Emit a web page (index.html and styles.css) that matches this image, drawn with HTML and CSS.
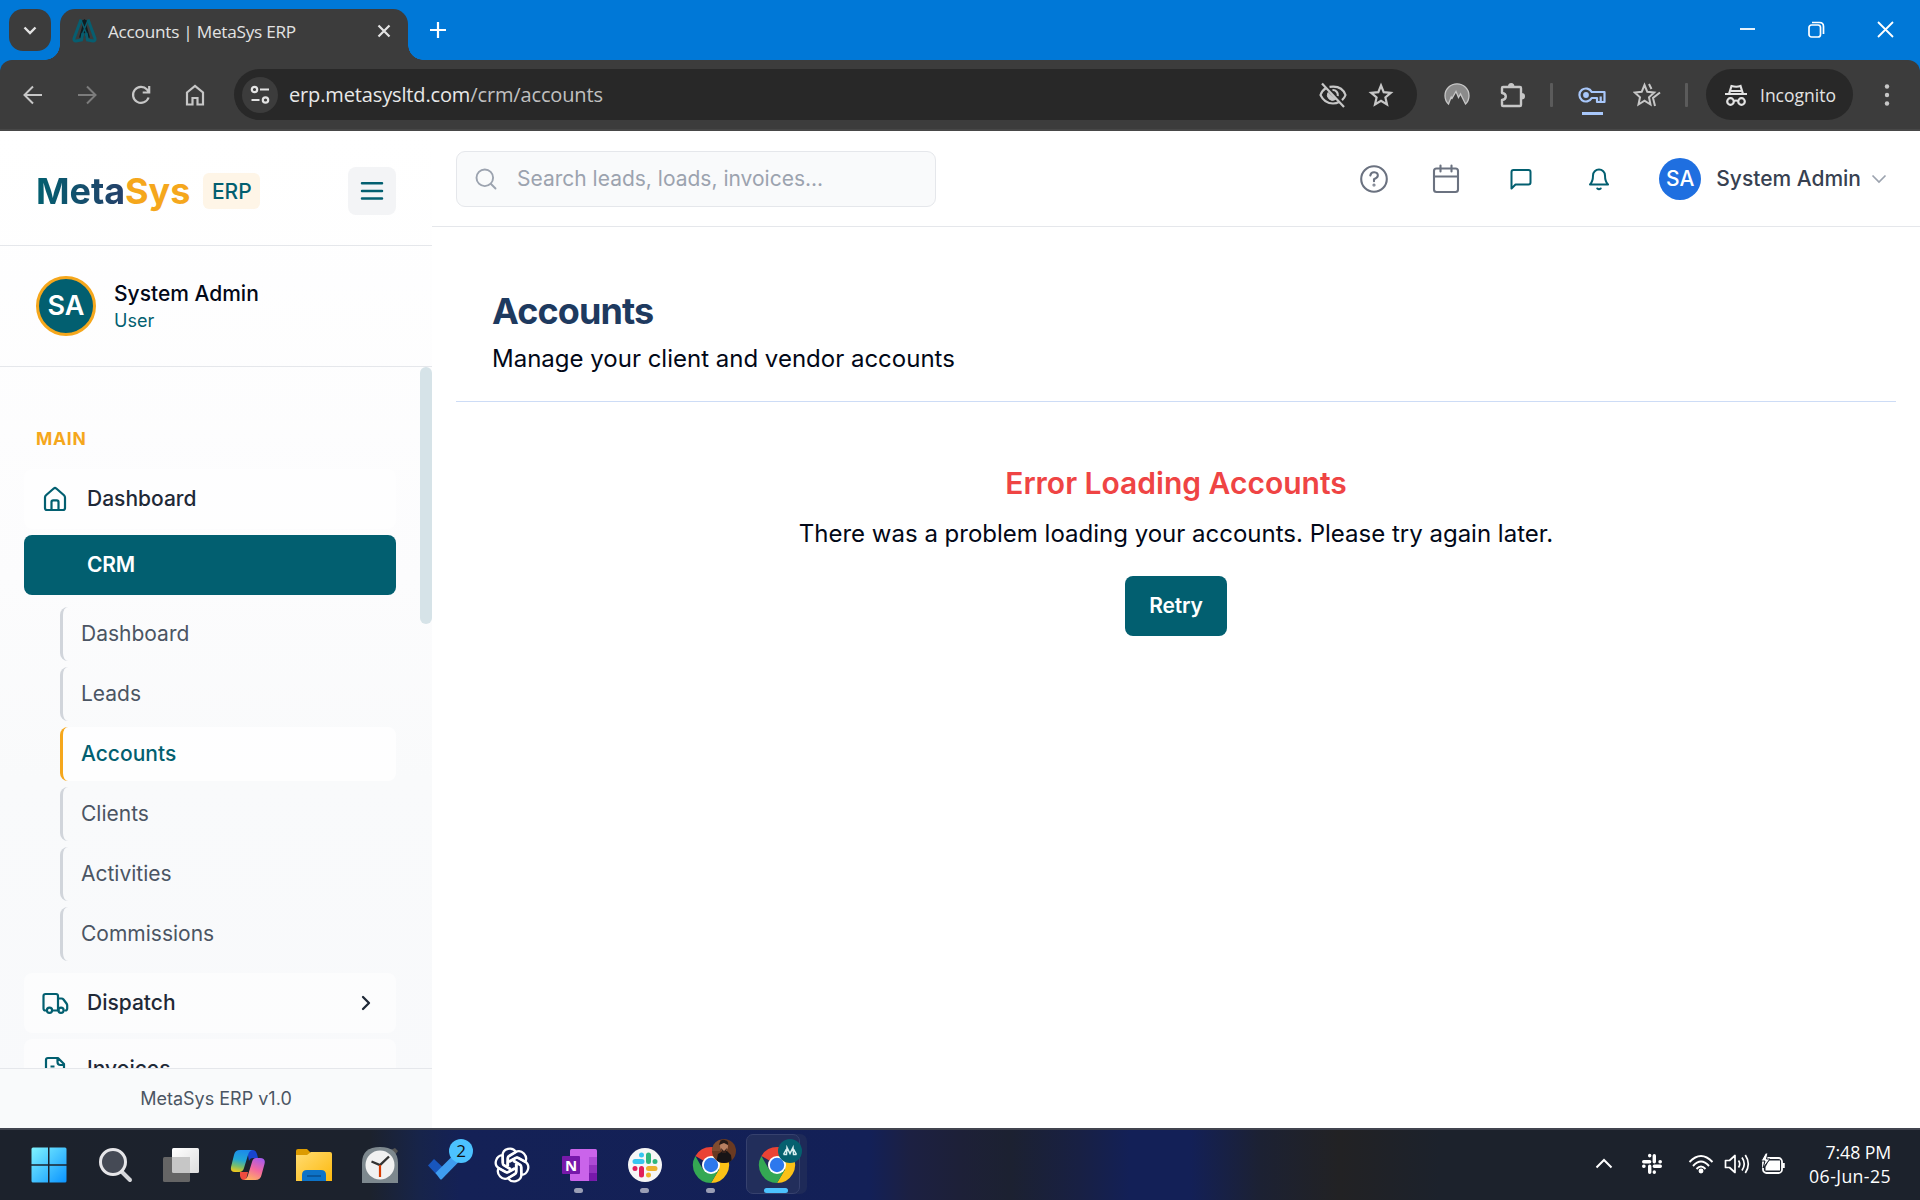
FILE: index.html
```html
<!DOCTYPE html>
<html lang="en">
<head>
<meta charset="utf-8">
<title>Accounts | MetaSys ERP</title>
<link rel="stylesheet" href="styles.css">
</head>
<body>
<div class="screen">
  <header class="tabstrip">
    <div class="tab-search"><svg width="42" height="42" viewBox="0 0 42 42" fill="none" stroke="#e3e3e3" stroke-width="2.4"><path d="M15.500 18.500l5.500 5.500 5.500-5.500"/></svg></div>
    <div class="tab">
      <svg class="favicon" width="25" height="25" viewBox="0 0 25 25" fill="none"><path d="M11 2L16 20M14 2L9 20" stroke="#111c20" stroke-width="4"/><path d="M9 1.500L2 20.500Q1.500 23 4 23L9.500 22L11 15M16 1.500L23 20.500Q23.500 23 21 23L15.500 22L14 15" stroke="#075e70" stroke-width="3"/><path d="M9 2l6 15M16 2l-6 15" stroke="#075e70" stroke-width="1.500"/></svg>
      <span class="tab-title">Accounts | MetaSys ERP</span>
      <svg class="tab-close" width="14" height="14" viewBox="0 0 14 14" stroke="#e3e3e3" stroke-width="2.200"><path d="M1.500 1.500l11 11M12.500 1.500l-11 11"/></svg>
    </div>
    <svg class="new-tab" width="18" height="18" viewBox="0 0 18 18" stroke="#fff" stroke-width="2.200"><path d="M9 1v16M1 9h16"/></svg>
    <div class="window-controls">
      <svg width="17" height="17" viewBox="0 0 17 17" stroke="#fff" stroke-width="1.800"><path d="M1 8h15"/></svg>
      <svg width="17" height="17" viewBox="0 0 17 17" fill="none" stroke="#fff" stroke-width="1.700"><rect x="1" y="4" width="11.500" height="12" rx="2.500"/><path d="M4 1.500h7.500q4 0 4 4V13"/></svg>
      <svg width="17" height="17" viewBox="0 0 17 17" stroke="#fff" stroke-width="1.800"><path d="M1 1l15 15M16 1L1 16"/></svg>
    </div>
  </header>

  <nav class="toolbar">
    <div class="nav-buttons">
      <svg width="20" height="20" viewBox="0 0 20 20" fill="none" stroke="#c7c7c7" stroke-width="2"><path d="M19 10H2M10 1.500L1.500 10l8.500 8.500"/></svg>
      <svg width="20" height="20" viewBox="0 0 20 20" fill="none" stroke="#7c7c7c" stroke-width="2"><path d="M1 10h17M10 1.500l8.500 8.500-8.500 8.500"/></svg>
      <svg width="20" height="20" viewBox="0 0 20 20" fill="none" stroke="#c7c7c7" stroke-width="2.200"><path d="M17.600 12.500A8 8 0 1 1 16 4.500L18 7M18.200 1v6.500h-6.500"/></svg>
      <svg width="20" height="22" viewBox="0 0 20 22" fill="none" stroke="#c7c7c7" stroke-width="2.200"><path d="M2 8.500L10 2l8 6.500V20.500h-5.500V14h-5v6.500H2z"/></svg>
    </div>
    <div class="omnibox">
      <div class="site-info"><svg width="20" height="20" viewBox="0 0 20 20" fill="none" stroke="#e3e3e3" stroke-width="2.200"><circle cx="4.500" cy="4.500" r="2.700"/><path d="M10 4.500h9M1.500 15h8"/><circle cx="15.500" cy="15" r="2.700"/></svg></div>
      <span class="url">erp.metasysltd.com<span class="path">/crm/accounts</span></span>
      <svg class="eye" width="30" height="28" viewBox="0 0 30 28" fill="none" stroke="#c7c7c7" stroke-width="2.200"><path d="M8 7Q4 9.500 2.500 14Q6.500 22.500 15 22.500Q18.500 22.500 21 21M11.500 5.900Q24 4 27.500 14Q26.500 17 24 19.200"/><path d="M10 11.500a5.300 5.300 0 0 0 7.500 7z" fill="#c7c7c7" stroke-width="1"/><path d="M14.500 9a5 5 0 0 1 5.300 6"/><path d="M4 2.500L26 26"/></svg>
      <svg class="star" width="26" height="26" viewBox="0 0 26 26" fill="none" stroke="#c7c7c7" stroke-width="2.200"><path d="M13 3.500l2.700 6.700 7.100.600-5.400 4.700 1.600 7-6-3.700-6 3.700 1.600-7-5.400-4.700 7.100-.600z"/></svg>
    </div>
    <svg class="ext-mountain" width="26" height="26" viewBox="0 0 26 26"><path d="M4.500 22A12 11.800 0 1 1 21.500 22L16.500 12l-2 3.500-2.500-6-4 7-.800-1.500z" fill="#8b8b8b" stroke="#c7c7c7" stroke-width="1.300"/></svg>
    <svg class="ext-puzzle" width="28" height="28" viewBox="0 0 28 28" fill="none" stroke="#c7c7c7" stroke-width="2.400" stroke-linejoin="round"><path d="M5 6h17q1 0 1 1v17q0 1-1 1H5q-1 0-1-1v-5q3.800-.500 3.800-3.500T4 12V7q0-1 1-1z"/><path d="M10 5.500q0-3.500 3.200-3.500t3.200 3.500zM23.500 12q3.500 0 3.500 3.200t-3.500 3.200z" fill="#c7c7c7" stroke="none"/></svg>
    <i class="divider"></i>
    <div class="key"><svg width="28" height="18" viewBox="0 0 28 18" fill="none" stroke="#a8c7fa" stroke-width="2.200" stroke-linejoin="round"><path d="M13.700 6a6.500 6.500 0 1 0 0 6H19v4h7.500V6zM22.700 15.500v-5"/><circle cx="8" cy="9" r="2.900" fill="#a8c7fa" stroke="none"/></svg></div>
    <svg class="star-media" width="28" height="26" viewBox="0 0 28 26" fill="none" stroke="#c7c7c7" stroke-width="2"><path d="M11.500 3l2.800 6.800 6.900.700-5.200 4.800 1.500 7.200-6-3.800-6 3.800L7 15.300l-5.200-4.800 6.900-.700zM16 2l2.500 5M27 10.500l-7 5.500 2 8"/></svg>
    <i class="divider second"></i>
    <div class="incognito"><svg width="24" height="24" viewBox="0 0 24 24" fill="none" stroke="#e3e3e3" stroke-width="2.200"><path d="M1 11h22M5 11l2.500-8q5 1.500 9 0L19 11"/><circle cx="6.500" cy="18.500" r="3.300"/><circle cx="17.500" cy="18.500" r="3.300"/><path d="M10 18q2-1 4 0M7 8h10"/></svg><span>Incognito</span></div>
    <svg class="menu-dots" width="6" height="24" viewBox="0 0 6 24" fill="#c7c7c7"><circle cx="3" cy="3.500" r="2.200"/><circle cx="3" cy="12" r="2.200"/><circle cx="3" cy="20.500" r="2.200"/></svg>
  </nav>

  <div class="app">
    <aside class="sidebar">
      <div class="brand">
        <span class="logo"><span class="logo-meta">Meta</span><span class="logo-sys">Sys</span></span>
        <span class="badge">ERP</span>
        <button class="burger"><svg width="24" height="20" viewBox="0 0 24 20" stroke="#025f70" stroke-width="2.500" stroke-linecap="round"><path d="M2 2.200h20M2 10h20M2 17.500h20"/></svg></button>
      </div>
      <div class="user">
        <div class="avatar">SA</div>
        <div class="user-text"><div class="user-name">System Admin</div><div class="user-role">User</div></div>
      </div>
      <div class="menu">
        <h2 class="section">MAIN</h2>
        <a class="item"><svg width="28" height="28" viewBox="0 0 28 28" fill="none" stroke="#025f70" stroke-width="2.200" stroke-linejoin="round"><path d="M4 12.500q0-1.300 1-2.200l7.700-6.800q1.300-1 2.600 0l7.700 6.800q1 1 1 2.200V23q0 2-2 2H6q-2 0-2-2z"/><path d="M10.500 25v-8q0-1.700 1.700-1.700h3.600q1.700 0 1.700 1.700v8"/></svg><span>Dashboard</span></a>
        <a class="item current"><span>CRM</span></a>
        <div class="submenu">
          <a>Dashboard</a><a>Leads</a><a class="selected">Accounts</a><a>Clients</a><a>Activities</a><a>Commissions</a>
        </div>
        <a class="item"><svg width="28" height="28" viewBox="0 0 28 28" fill="none" stroke="#025f70" stroke-width="2.200" stroke-linejoin="round" stroke-linecap="round"><path d="M5.500 21.500H4.500Q2.500 21.500 2.500 19.500V7Q2.500 5 4.500 5H15q2 0 2 2v14.500h-6M17 9.500h3.500q1.200 0 2 1l3 4q.700 1 .700 2V19.500q0 2-2 2M17 21.500h.500"/><circle cx="8.500" cy="21.300" r="2.600"/><circle cx="20" cy="21.300" r="2.600"/></svg><span>Dispatch</span><svg class="chev" width="12" height="18" viewBox="0 0 12 18" fill="none" stroke="#1f2937" stroke-width="2.300" stroke-linecap="round" stroke-linejoin="round"><path d="M3 3l6 6-6 6"/></svg></a>
        <a class="item"><svg width="28" height="28" viewBox="0 0 28 28" fill="none" stroke="#025f70" stroke-width="2.200" stroke-linejoin="round"><path d="M17 3H7Q5 3 5 5v18q0 2 2 2h14q2 0 2-2V9zM16.500 3v4q0 3 3 3H23M9.500 11.500h4M9.500 16h9"/></svg><span>Invoices</span></a>
      </div>
      <footer class="version">MetaSys ERP v1.0</footer>
      <i class="scroll-thumb"></i>
    </aside>

    <main class="main">
      <div class="topbar">
        <div class="search"><svg width="22" height="22" viewBox="0 0 22 22" fill="none" stroke="#9ca3af" stroke-width="1.900" stroke-linecap="round"><circle cx="9.800" cy="9.800" r="8.300"/><path d="M16 16l4.500 4.500"/></svg><span>Search leads, loads, invoices...</span></div>
        <div class="actions">
          <svg width="30" height="30" viewBox="0 0 30 30" fill="none" stroke="#6b7280" stroke-width="2.100" stroke-linecap="round"><circle cx="15" cy="15" r="12.800"/><path d="M11.300 11.500q.700-3.500 4-3.300 3.800.300 3.500 3.600-.300 1.900-3.800 3.500v2"/><circle cx="15" cy="21" r=".500"/></svg>
          <svg width="30" height="30" viewBox="0 0 30 30" fill="none" stroke="#6b7280" stroke-width="2.100" stroke-linecap="round"><rect x="3" y="4.500" width="24" height="23.500" rx="2.500"/><path d="M3 12.500h24M9.500 1.500v6M20.500 1.500v6"/></svg>
          <svg width="24" height="24" viewBox="0 0 24 24" fill="none" stroke="#025f70" stroke-width="2" stroke-linejoin="round"><path d="M2.500 21.500V5q0-2 2-2h15q2 0 2 2v10.500q0 2-2 2H6.500z"/></svg>
          <svg width="24" height="24" viewBox="0 0 24 24" fill="none" stroke="#025f70" stroke-width="2" stroke-linejoin="round" stroke-linecap="round"><path d="M3 17.500c2.500-2.500 3-5 3-9a6 6 0 0 1 12 0c0 4 .500 6.500 3 9zM10.300 21.500q1.700 1.500 3.400 0"/></svg>
          <div class="account"><div class="account-avatar">SA</div><span>System Admin</span><svg width="16" height="12" viewBox="0 0 16 12" fill="none" stroke="#9ca3af" stroke-width="1.700"><path d="M1.500 2.500L8 9l6.500-6.500"/></svg></div>
        </div>
      </div>
      <div class="page-head">
        <h1>Accounts</h1>
        <p>Manage your client and vendor accounts</p>
      </div>
      <section class="error">
        <h3>Error Loading Accounts</h3>
        <p>There was a problem loading your accounts. Please try again later.</p>
        <button class="retry">Retry</button>
      </section>
    </main>
  </div>

  <footer class="taskbar">
    <div class="task-icons">
      <div class="task"><svg width="36" height="36" viewBox="0 0 36 36"><defs><linearGradient id="win" x1="0" y1="0" x2="1" y2="1"><stop stop-color="#80f4ff"/><stop offset="1" stop-color="#0a94ff"/></linearGradient></defs><path fill="url(#win)" d="M2 .500h15v16.700H.500V2Q.500.500 2 .500zM18.500.500H34q1.500 0 1.500 1.500v15.200h-17zM.500 18.700H17v16.800H2q-1.500 0-1.500-1.500zM18.500 18.700h17V34q0 1.500-1.500 1.500H18.500z"/></svg></div>
      <div class="task"><svg width="36" height="36" viewBox="0 0 36 36"><path d="M25 25l8 8" stroke="#d5d6da" stroke-width="4" stroke-linecap="round"/><circle cx="16" cy="15" r="12.500" fill="#454a55" stroke="#e6e6e9" stroke-width="3"/></svg></div>
      <div class="task"><svg width="38" height="36" viewBox="0 0 38 36"><defs><linearGradient id="tv" x1="0" y1="0" x2="1" y2="1"><stop stop-color="#fff"/><stop offset="1" stop-color="#ddd"/></linearGradient></defs><rect x="10" y="1" width="27" height="25" rx="1.500" fill="url(#tv)"/><rect x="1" y="10" width="27" height="25" rx="1.500" fill="#656565"/><path d="M10 10h18v16H11.500q-1.500 0-1.500-1.500z" fill="#c6c6c6"/></svg></div>
      <div class="task"><svg width="36" height="34" viewBox="0 0 36 34"><defs><linearGradient id="cp1" x1=".5" y1="0" x2=".3" y2="1"><stop stop-color="#1c8bea"/><stop offset=".45" stop-color="#22a8d5"/><stop offset=".75" stop-color="#7cbe68"/><stop offset="1" stop-color="#f0c81c"/></linearGradient><linearGradient id="cp2" x1=".7" y1="0" x2=".3" y2="1"><stop stop-color="#a85bea"/><stop offset=".5" stop-color="#f368a0"/><stop offset="1" stop-color="#ffb062"/></linearGradient></defs><path d="M17 2h6q3 0 4 4l1 4h-5q-3 0-4 3z" fill="#1745cf"/><path d="M10 24h8l-2 8h-2q-3 0-4-4z" fill="#ee4c3f"/><path d="M10 2h12q-3 1-4 5l-4 13q-1 4-5 4H5q-5 0-4-5l3-12q1-5 6-5z" fill="url(#cp1)"/><path d="M26 10h4q6 0 4.500 6l-3 11q-1 5-6 5H14q3-1 4-5l4-13q1-4 4-4z" fill="url(#cp2)"/></svg></div>
      <div class="task"><svg width="38" height="36" viewBox="0 0 38 36"><defs><linearGradient id="fd" x1="0" y1="0" x2="1" y2="1"><stop stop-color="#ffdc72"/><stop offset="1" stop-color="#fdb90d"/></linearGradient></defs><path d="M1 4q0-2 2-2h9l4 4v5H1z" fill="#dc9b00"/><path d="M1 8h11l4-3h19q2 0 2 2v27H1z" fill="url(#fd)"/><path d="M7 34v-6q0-5 5-5h14q5 0 5 5v6z" fill="#0d73c8"/><path d="M12 29h14" stroke="#09579d" stroke-width="2"/></svg></div>
      <div class="task"><svg width="38" height="38" viewBox="0 0 38 38"><path d="M30 4l4-2 3 3-3 4z" fill="#555"/><path d="M1 37V17Q1 1 19 1t18 16v20z" fill="#7d888e"/><circle cx="19" cy="19" r="14.500" fill="#f1f1f1"/><path d="M10.500 15.500L19 19l9-8.500" fill="none" stroke="#333" stroke-width="2.400"/><path d="M19 19v12" stroke="#d83b01" stroke-width="2.200"/></svg></div>
      <div class="task todo"><svg width="38" height="38" viewBox="0 0 38 38"><path d="M1 19.500l6-6.500 9 8.500-6.500 7z" fill="#1856bd"/><path d="M8.500 27L29 6.500l6 6-20 20.500q-1 1-2 0z" fill="#3f9df0"/></svg><span class="count">2</span></div>
      <div class="task"><svg width="36" height="36" viewBox="-18 -18 36 36" fill="none" stroke="#fff" stroke-width="2.300" stroke-linejoin="round"><path id="petal" d="M-9.500 -9V-2.500Q-9.500 -.500 -8 .500L0 5.500M-9.500 -9C-9.500 -17 .500 -18.500 4 -13L-4 -8V1"/><use href="#petal" transform="rotate(60)"/><use href="#petal" transform="rotate(120)"/><use href="#petal" transform="rotate(180)"/><use href="#petal" transform="rotate(240)"/><use href="#petal" transform="rotate(300)"/></svg></div>
      <div class="task running onenote"><svg width="36" height="34" viewBox="0 0 36 34"><rect x="9" y="1" width="27" height="32" rx="1.500" fill="#ca64ea"/><path d="M28 9h8v8h-8z" fill="#ae4bd5"/><path d="M28 17h8v8h-8z" fill="#9332bf"/><path d="M28 25h8v6.500q0 1.500-1.500 1.500H28z" fill="#7719aa"/><rect x="1" y="8" width="18" height="18" rx="1" fill="#7719aa"/><text x="10" y="22.500" text-anchor="middle" class="one-n">N</text></svg></div>
      <div class="task running"><svg width="36" height="36" viewBox="0 0 36 36" fill="none" stroke-width="5" stroke-linecap="round"><circle cx="18" cy="18" r="17" fill="#f6f6f6"/><path d="M14.500 8v.100M8 14.500h7" stroke="#36c5f0"/><path d="M21.500 8v6.500M28 14.500v.100" stroke="#2eb67d"/><path d="M21.500 21.500H28M21.500 28v.100" stroke="#ecb22e"/><path d="M14.500 21.500V28M8 21.500v.100" stroke="#e01e5a"/></svg></div>
      <div class="task running"><svg class="chrome" width="38" height="38" viewBox="0 0 38 38"><g id="chromeLogo"><path d="M19 19L3.400 10A18 18 0 0 1 34.600 10z" fill="#ea4335"/><path d="M19 10h15.600A18 18 0 0 1 19 37l8-13.500z" fill="#fbc116"/><path d="M3.400 10A18 18 0 0 0 19 37l8-13.500-8-1-8 1z" fill="#34a853"/><circle cx="19" cy="19" r="9" fill="#fff"/><circle cx="19" cy="19" r="7.200" fill="#2d78ed"/></g></svg><svg class="profile" width="24" height="24" viewBox="0 0 24 24"><defs><clipPath id="round"><circle cx="12" cy="12" r="12"/></clipPath></defs><g clip-path="url(#round)"><path d="M0 0h24v24H0z" fill="#6a3a22"/><path d="M0 0h8v12H0z" fill="#804c30"/><path d="M4 24l2-9 5-3h4l4 4 1 8z" fill="#171416"/><ellipse cx="12" cy="7" rx="4" ry="6" fill="#b98061"/><path d="M7 6q1-6 6-5 4 1 3 5l-4-2z" fill="#251916"/><path d="M9 9l3 3 3-3-1 5h-4z" fill="#352019"/></g></svg></div>
      <div class="task running active"><svg class="chrome" width="38" height="38" viewBox="0 0 38 38"><use href="#chromeLogo"/></svg><svg class="profile" width="24" height="24" viewBox="0 0 24 24"><circle cx="12" cy="12" r="12" fill="#05606f"/><path d="M5.500 15.500h3L9 8.500l3 6 3-6 .500 7h3M9.300 8.500L5.500 15.500M14.700 8.500l3.800 7" fill="none" stroke="#d9eef0" stroke-width="1.500"/></svg></div>
    </div>
    <div class="tray">
      <svg width="18" height="12" viewBox="0 0 18 12" fill="none" stroke="#fff" stroke-width="2"><path d="M1.500 9.500L9 2l7.500 7.500"/></svg>
      <svg width="22" height="22" viewBox="0 0 22 22" fill="none" stroke="#fff" stroke-width="3.400" stroke-linecap="round"><path d="M8.700 2.500v.300M2.700 8.700h6M13.300 2.700v6M19.300 8.700h-.300M13.300 13.300h6M13.300 19.300v-.300M8.700 13.300v6M2.700 13.300h.300"/></svg>
      <svg width="26" height="20" viewBox="0 0 26 20" fill="none" stroke="#fff" stroke-width="1.900"><path d="M1.500 8Q13-4 24.500 8M5 12Q13 3 21 12M8.500 15q4.500-5 9 0"/><circle cx="13" cy="17" r="1.500" fill="#fff"/></svg>
      <svg width="26" height="22" viewBox="0 0 26 22" fill="none" stroke="#fff" stroke-width="1.700" stroke-linejoin="round"><path d="M1.500 7.500h4L11 2.500v17l-5.500-5h-4zM14.500 7.500q2.500 3.500 0 7M18 4.500q4.500 6.500 0 13M21.300 2q6 9 0 18"/></svg>
      <svg width="26" height="22" viewBox="0 0 26 22"><rect x="3" y="5" width="19" height="15" rx="3.500" fill="none" stroke="#fff" stroke-width="1.800"/><path d="M9 7.500h11v10H5.500V14z" fill="#fff"/><path d="M23.500 10v5" stroke="#fff" stroke-width="2.500"/><path d="M5.500 0L1 8h4l-2 7 7-9H6.500L8 0z" fill="#fff" stroke="#1c222d"/></svg>
      <div class="clock"><div>7:48 PM</div><div class="date">06-Jun-25</div></div>
    </div>
  </footer>
</div>
</body>
</html>
```
FILE: styles.css
```css
* { box-sizing: border-box; }
body { margin: 0; font-family: Inter, sans-serif; }
h1, h2, h3, p { margin: 0; }
button { border: 0; padding: 0; font-family: inherit; }
svg { display: block; flex: none; }
.screen { width: 1920px; height: 1200px; display: flex; flex-direction: column; overflow: hidden; background: #fff; }

/* Browser window */
.tabstrip { height: 60px; flex: none; display: flex; padding: 9px 26px 0 9px; background: #0078d7; font-family: "Open Sans", sans-serif; }
.tab-search { width: 42px; height: 42px; border-radius: 14px; background: #3c3c3c; }
.tab { position: relative; width: 348px; height: 51px; margin-left: 9px; padding: 0 17px 0 12px; display: flex; align-items: center; border-radius: 15px 15px 0 0; background: #3c3c3c; }
.tab::before, .tab::after { content: ""; position: absolute; bottom: 0; width: 15px; height: 15px; }
.tab::before { left: -15px; background: radial-gradient(circle at 0 0, transparent 14.500px, #3c3c3c 15px); }
.tab::after { right: -15px; background: radial-gradient(circle at 100% 0, transparent 14.500px, #3c3c3c 15px); }
.favicon { margin-top: -8px; }
.tab-title { margin: -6px auto 0 11px; font-size: 17.200px; letter-spacing: -.25px; color: #e3e3e3; white-space: nowrap; }
.tab-close { margin-top: -8px; }
.new-tab { margin: 12px 0 0 21px; }
.window-controls { margin: 12px 0 0 auto; display: flex; gap: 52px; }
.toolbar { height: 71px; flex: none; display: flex; align-items: center; padding-left: 23px; border-bottom: 2px solid #474747; border-radius: 12px 12px 0 0; background: #3c3c3c; box-shadow: 0 -12px 0 0 #0078d7; clip-path: inset(0); font-family: "Open Sans", sans-serif; }
.screen { background: linear-gradient(#0078d7 90px, #fff 90px); }
.nav-buttons { display: flex; align-items: center; gap: 34px; }
.omnibox { width: 1183px; height: 51px; margin-left: 29px; padding: 0 23px 0 8px; display: flex; align-items: center; border-radius: 26px; background: #282828; }
.site-info { width: 36px; height: 36px; display: grid; place-items: center; border-radius: 50%; background: #3c3c3c; }
.url { margin: 0 auto 0 11px; font-size: 20px; letter-spacing: -.14px; color: #e8e8e8; }
.path { color: #c0c0c0; }
.star { margin-left: 20px; }
.ext-mountain { margin-left: 27px; }
.ext-puzzle { margin-left: 28px; }
.divider { width: 3px; height: 24px; margin-left: 24px; border-radius: 1px; background: #5b5b5b; }
.key { height: 44px; margin-left: 25px; padding-top: 13px; background: linear-gradient(#a8c7fa, #a8c7fa) 4px 39px / 21px 3px no-repeat; }
.star-media { margin-left: 27px; }
.divider.second { margin-left: 24px; }
.incognito { width: 147px; height: 51px; margin-left: 18px; padding-left: 18px; display: flex; align-items: center; gap: 12px; border-radius: 26px; background: #282828; color: #e3e3e3; font-size: 17.500px; letter-spacing: 0; }
.menu-dots { margin-left: 31px; }

/* Application */
.app { height: 997px; flex: none; display: flex; color: #020817; }
.sidebar { position: relative; width: 432px; height: 997px; flex: none; display: flex; flex-direction: column; background: linear-gradient(#fff, #fcfcfd 45%, #f9fafb 65%, #f8f9fb); }
.brand { height: 115px; flex: none; padding: 0 36px; display: flex; align-items: center; border-bottom: 1px solid #e5e7eb; }
.logo { margin-top: 6px; font-size: 36px; line-height: 45px; font-weight: 700; letter-spacing: -.05px; }
.logo-meta { background: linear-gradient(90deg, #025f70, #25406a); background-clip: text; color: transparent; }
.logo-sys { color: #f5a71c; }
.badge { width: 57px; height: 36px; margin: 5px 0 0 13px; border-radius: 6px; background: #fef5e7; color: #025f70; font-size: 21px; line-height: 37px; font-weight: 500; text-align: center; }
.burger { width: 48px; height: 48px; margin: 5px 0 0 auto; display: grid; place-items: center; border-radius: 8px; background: #f3f4f6; }
.user { height: 121px; flex: none; padding: 0 36px; display: flex; align-items: center; gap: 18px; border-bottom: 1px solid #e5e7eb; }
.user-text { padding-top: 2px; }
.avatar { width: 60px; height: 60px; padding-bottom: 1px; display: grid; place-items: center; border: 3px solid #f5a71c; border-radius: 50%; background: #025f70; color: #fff; font-size: 27px; font-weight: 600; }
.user-name { font-size: 21px; line-height: 27px; font-weight: 500; }
.user-role { font-size: 18px; line-height: 27px; color: #025f70; }
.menu { flex: 1; min-height: 0; padding: 59px 36px 0 24px; overflow: hidden; }
.section { margin: 0 0 18px 12px; height: 25px; line-height: 25px; font-size: 17.500px; font-weight: 700; letter-spacing: .7px; color: #f5a71c; }
.item { height: 60px; margin-bottom: 6px; padding: 0 24px 0 17px; display: flex; align-items: center; gap: 18px; border-radius: 8px; background: rgba(255,255,255,.5); color: #1f2937; font-size: 21px; font-weight: 500; }
.item span { padding-bottom: 1px; }
.item.current { margin-bottom: 12px; padding-left: 63px; background: #025f70; color: #fff; font-weight: 600; letter-spacing: -.2px; }
.chev { margin-left: auto; }
.submenu { margin: 0 0 12px 36px; display: flex; flex-direction: column; gap: 6px; }
.submenu a { height: 54px; padding-left: 18px; line-height: 54px; border-left: 3px solid #d1d5db; border-radius: 8px; color: #4b5563; font-size: 21px; }
.submenu .selected { border-color: #f5a71c; background: rgba(255,255,255,.8); color: #025f70; font-weight: 500; }
.version { height: 60px; flex: none; border-top: 1px solid #e5e7eb; text-align: center; font-size: 18px; line-height: 60px; color: #4b5563; background: #f9fafb; }
.scroll-thumb { position: absolute; right: 0; top: 236px; width: 12px; height: 257px; border-radius: 6px; background: #d6e3e8; }
.main { flex: 1; display: flex; flex-direction: column; background: #fff; }
.topbar { height: 96px; flex: none; padding: 0 33px 0 24px; display: flex; align-items: center; justify-content: space-between; border-bottom: 1px solid #e5e7eb; }
.search { width: 480px; height: 56px; padding-left: 18px; display: flex; align-items: center; gap: 20px; border: 1px solid #e5e7eb; border-radius: 9px; background: #f9fafb; color: #9ca3af; font-size: 21px; }
.actions { display: flex; align-items: center; }
.actions > svg:nth-child(2) { margin-left: 42px; }
.actions > svg:nth-child(3) { margin-left: 48px; }
.actions > svg:nth-child(4) { margin-left: 54px; }
.account { margin-left: 48px; display: flex; align-items: center; color: #374151; font-size: 21px; font-weight: 500; }
.account-avatar { width: 42px; height: 42px; margin-right: 15px; display: grid; place-items: center; border-radius: 50%; background: #1f6fe0; color: #fff; font-size: 21px; }
.account svg { margin-left: 10px; }
.page-head { height: 175px; flex: none; margin: 0 24px; padding: 60px 36px 0; border-bottom: 1px solid #cddcf6; }
.page-head h1 { font-size: 36px; line-height: 48px; font-weight: 700; letter-spacing: -.9px; color: #1e3a5f; }
.page-head p { margin-top: 6px; font-size: 24px; line-height: 36px; }
.error { padding-top: 60px; display: flex; flex-direction: column; align-items: center; }
.error h3 { font-size: 30px; line-height: 42px; font-weight: 600; color: #ef4444; }
.error p { margin-top: 12px; font-size: 24px; line-height: 36px; }
.retry { width: 102px; height: 60px; margin-top: 24px; padding-bottom: 1px; border-radius: 8px; background: #025f70; color: #fff; font-size: 21px; font-weight: 600; letter-spacing: -.15px; }

/* Desktop taskbar */
.taskbar { height: 72px; flex: none; padding: 0 29px 0 16px; display: flex; align-items: center; justify-content: space-between; border-top: 2px solid #41444f; background: linear-gradient(90deg, #1c222c 0, #1c222d 370px, #17244a 420px, #142156 460px, #132057 870px, #1c2042 910px, #1d2038 960px, #1c2131 1010px, #182044 1080px, #132057 1130px, #132057 1190px, #1c2133 1260px, #222224 1340px, #1c222c 1440px); font-family: "Open Sans", sans-serif; color: #fff; }
.task-icons { display: flex; }
.task { position: relative; width: 66.200px; height: 70px; padding-bottom: 1px; display: grid; place-items: center; }
.task > * { grid-area: 1 / 1; }
.running::after { content: ""; position: absolute; bottom: 7px; left: 28px; width: 9px; height: 5px; border-radius: 3px; background: #9a9eb5; }
.active::before { content: ""; position: absolute; inset: 4px 10px 6px 2px; border: 1px solid #36416e; border-radius: 7px; background: #222e5b; box-shadow: 7px 0 0 0 #1e2a58; }
.active::after { left: 20px; width: 24px; background: #4cc2ff; }
.active svg { position: relative; }
.count { position: absolute; top: 9px; left: 36px; width: 24px; height: 24px; border-radius: 50%; background: #4cc2ff; color: #111; text-align: center; font-size: 17px; line-height: 24px; }
.task .profile { position: absolute; top: 9px; right: 8px; }
.one-n { font: 700 15px "Open Sans", sans-serif; fill: #fff; }
.tray { display: flex; align-items: center; }
.tray svg { margin-bottom: 2px; }
.tray svg:nth-child(2) { margin-left: 28px; }
.tray svg:nth-child(3) { margin-left: 25px; }
.tray svg:nth-child(4) { margin-left: 10px; }
.tray svg:nth-child(5) { margin-left: 10px; }
.clock { width: 92px; margin: 0 0 2px 13px; text-align: right; font-size: 17.700px; line-height: 24px; white-space: nowrap; letter-spacing: -.1px; }
.date { letter-spacing: .4px; }
```
